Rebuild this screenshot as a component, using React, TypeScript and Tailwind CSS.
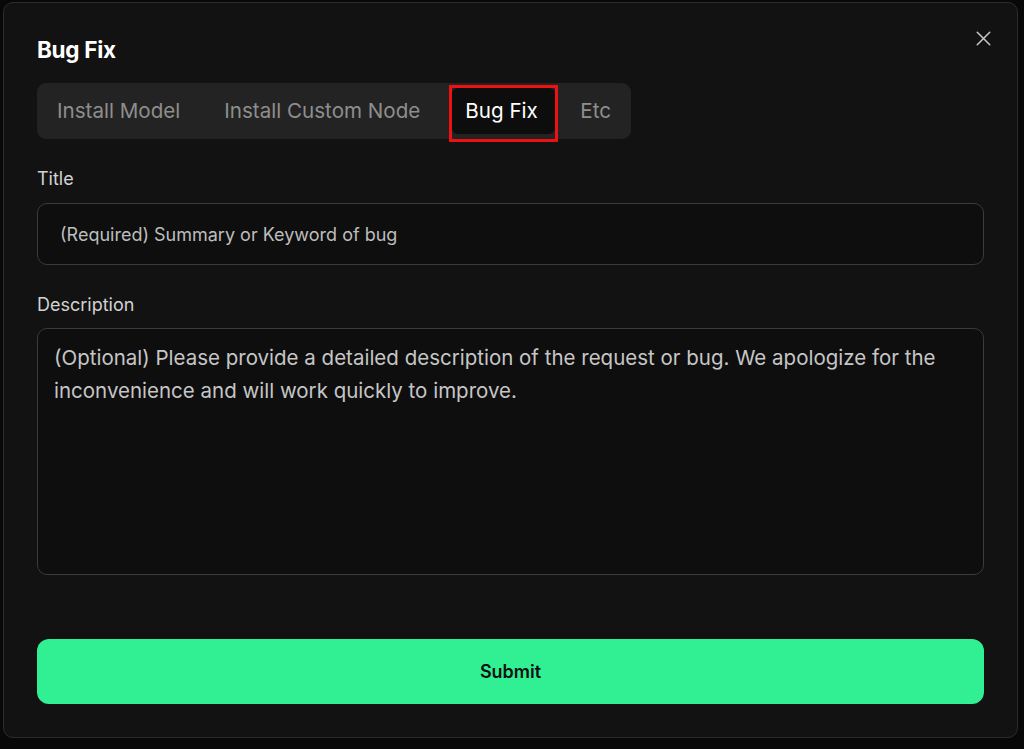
import { X } from "lucide-react";

export default function App() {
  return (
    <div
      className="w-full h-[749px] bg-[#080808] pt-[2px] pl-[3px] overflow-hidden"
      style={{ fontFamily: "Inter, 'Noto Sans', sans-serif" }}
    >
      <div className="relative w-[1015px] h-[736px] bg-[#121212] border border-[#2c2c2c] rounded-[10px] px-[33px] pt-[33px] flex flex-col">
        <button className="absolute top-[23px] right-[21px] text-[#c4c4c4]">
          <X size={25} strokeWidth={1.5} />
        </button>

        <h2 className="text-[22.5px] leading-[28px] font-bold text-white tracking-[-0.3px]">Bug Fix</h2>

        {/* tab strip */}
        <div className="mt-[19px] self-start flex items-center h-[56px] p-[5px] bg-[#232323] rounded-[9px] text-[20.6px]">
          <div className="h-[46px] px-[15px] flex items-center text-[#8e8e8e]">Install Model</div>
          <div className="ml-[14px] h-[46px] px-[15px] flex items-center text-[#8e8e8e]">Install Custom Node</div>
          <div className="relative ml-[17px] w-[103px] h-[46px] pl-[13px] flex items-center rounded-[6px] bg-[#0d0d0d] text-white">
            Bug Fix
            <span className="absolute -left-[3px] -top-[3px] -right-[3px] -bottom-[8px] border-[3px] border-[#ee1111] pointer-events-none" />
          </div>
          <div className="ml-[10px] h-[46px] px-[15px] flex items-center text-[#8e8e8e]">Etc</div>
        </div>

        <label className="mt-[28px] text-[18px] leading-[24px] text-[#d2d2d2]">Title</label>
        <div className="mt-[12px] h-[62px] rounded-[10px] border border-[#3b3b3b] bg-[#0e0e0e] flex items-center px-[22px]">
          <span className="text-[18px] text-[#bdbdbd]">(Required) Summary or Keyword of bug</span>
        </div>

        <label className="mt-[28px] text-[18px] leading-[24px] text-[#d2d2d2]">Description</label>
        <div className="mt-[11px] h-[247px] rounded-[10px] border border-[#3b3b3b] bg-[#0e0e0e] px-[16px] pt-[12px]">
          <p className="text-[20.5px] leading-[33px] text-[#c6c6c6]">
            (Optional) Please provide a detailed description of the request or bug. We apologize for the
            inconvenience and will work quickly to improve.
          </p>
        </div>

        <button className="mt-[64px] h-[65px] rounded-[12px] bg-[#31f094] text-[#111] text-[18px] font-semibold">
          Submit
        </button>
      </div>
    </div>
  );
}
